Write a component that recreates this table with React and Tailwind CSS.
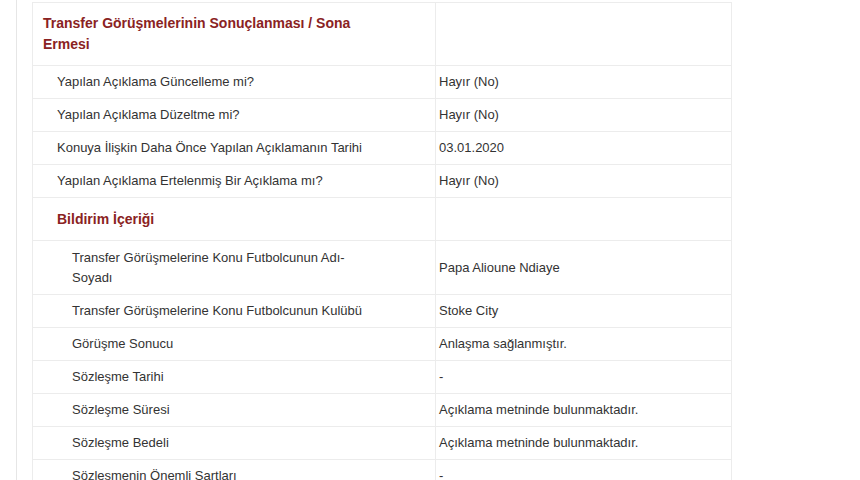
// Transfer disclosure detail table (KAP style notification view).

const rows = [
  { type: 'head', label: 'Transfer Görüşmelerinin Sonuçlanması / Sona Ermesi', level: 0 },
  { label: 'Yapılan Açıklama Güncelleme mi?', value: 'Hayır (No)', level: 1 },
  { label: 'Yapılan Açıklama Düzeltme mi?', value: 'Hayır (No)', level: 1 },
  { label: 'Konuya İlişkin Daha Önce Yapılan Açıklamanın Tarihi', value: '03.01.2020', level: 1 },
  { label: 'Yapılan Açıklama Ertelenmiş Bir Açıklama mı?', value: 'Hayır (No)', level: 1 },
  { type: 'head', label: 'Bildirim İçeriği', level: 1 },
  { label: 'Transfer Görüşmelerine Konu Futbolcunun Adı-Soyadı', value: 'Papa Alioune Ndiaye', level: 2, tall: true },
  { label: 'Transfer Görüşmelerine Konu Futbolcunun Kulübü', value: 'Stoke City', level: 2 },
  { label: 'Görüşme Sonucu', value: 'Anlaşma sağlanmıştır.', level: 2 },
  { label: 'Sözleşme Tarihi', value: '-', level: 2 },
  { label: 'Sözleşme Süresi', value: 'Açıklama metninde bulunmaktadır.', level: 2 },
  { label: 'Sözleşme Bedeli', value: 'Açıklama metninde bulunmaktadır.', level: 2 },
  { label: 'Sözleşmenin Önemli Şartları', value: '-', level: 2 },
];

// padding-left per nesting level
const indent = ['pl-[10px]', 'pl-[24px]', 'pl-[39px]'];

function Row({ row }) {
  if (row.type === 'head') {
    // the top section title wraps on two lines, the inner one is a single line
    const pad = row.level === 0 ? 'py-[10px] leading-[21px]' : 'py-[10px] leading-[22px]';
    return (
      <tr className="border-t border-[#ececec]">
        <td className={`${indent[row.level]} ${pad} pr-[60px] align-middle border-r border-[#ececec] text-[14px] font-bold text-[#8a2222]`}>
          {row.label}
        </td>
        <td className="pl-[3px]"></td>
      </tr>
    );
  }
  const pad = row.tall ? 'py-[6.5px]' : 'py-[6px]';
  return (
    <tr className="border-t border-[#ececec]">
      <td className={`${indent[row.level]} ${pad} pr-[60px] align-middle border-r border-[#ececec] text-[13px] leading-[20px] text-[#333333]`}>
        {row.label}
      </td>
      <td className={`pl-[3px] pr-2 ${pad} align-middle text-[13px] leading-[20px] text-[#333333]`}>
        {row.value}
      </td>
    </tr>
  );
}

export default function App() {
  return (
    <div className="min-h-screen bg-white flex" style={{ fontFamily: '"Liberation Sans", Arial, sans-serif' }}>
      <div className="w-[16px] shrink-0"></div>
      <div className="border-l border-[#e6e6e6] pl-[15px] pt-[2px] min-h-screen">
        <table className="w-[700px] border-collapse border border-[#ececec] table-fixed">
          <colgroup>
            <col className="w-[403px]" />
            <col />
          </colgroup>
          <tbody>
            {rows.map((row, i) => (
              <Row key={i} row={row} />
            ))}
          </tbody>
        </table>
      </div>
    </div>
  );
}
